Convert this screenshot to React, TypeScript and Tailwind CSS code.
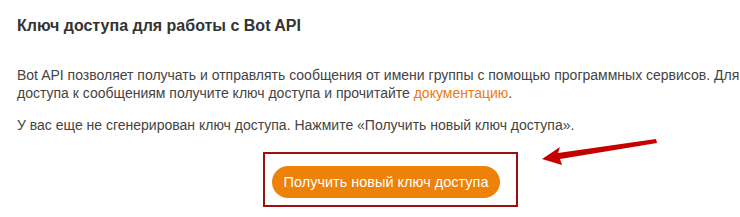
export default function App() {
  return (
    <div className="w-[740px] h-[217px] bg-white relative overflow-hidden" style={{ fontFamily: '"Liberation Sans", Arial, sans-serif' }}>
      <div className="pl-[17px] pt-[16px] text-[#333]">
        <h1 className="text-[16px] font-bold leading-[20px] text-[#333]">Ключ доступа для работы с Bot API</h1>
        <p className="mt-[30px] text-[14px] leading-[18px] text-[#444] whitespace-nowrap">
          Bot API позволяет получать и отправлять сообщения от имени группы с помощью программных сервисов. Для
          <br />
          доступа к сообщениям получите ключ доступа и прочитайте{" "}
          <a className="text-[#eb7a14]">документацию</a>.
        </p>
        <p className="mt-[14px] text-[14px] leading-[18px] text-[#444]">
          У вас еще не сгенерирован ключ доступа. Нажмите «Получить новый ключ доступа».
        </p>
        <div className="mt-[18px] ml-[246px] w-[255px] h-[55px] border-2 border-[#9c0f0f] flex items-center pl-[7px] pt-[5px]">
          <button className="h-[32px] w-[228px] rounded-full bg-[#ee8208] text-white text-[14.5px] leading-[32px]">
            Получить новый ключ доступа
          </button>
        </div>
      </div>
      <svg className="absolute left-[538px] top-[136px]" width="122" height="32" viewBox="0 0 122 32">
        <path d="M118 3 L20 17 L22 11 L4 23 L24 29 L22 23 L119 7 Z" fill="#c40000" />
      </svg>
    </div>
  );
}
